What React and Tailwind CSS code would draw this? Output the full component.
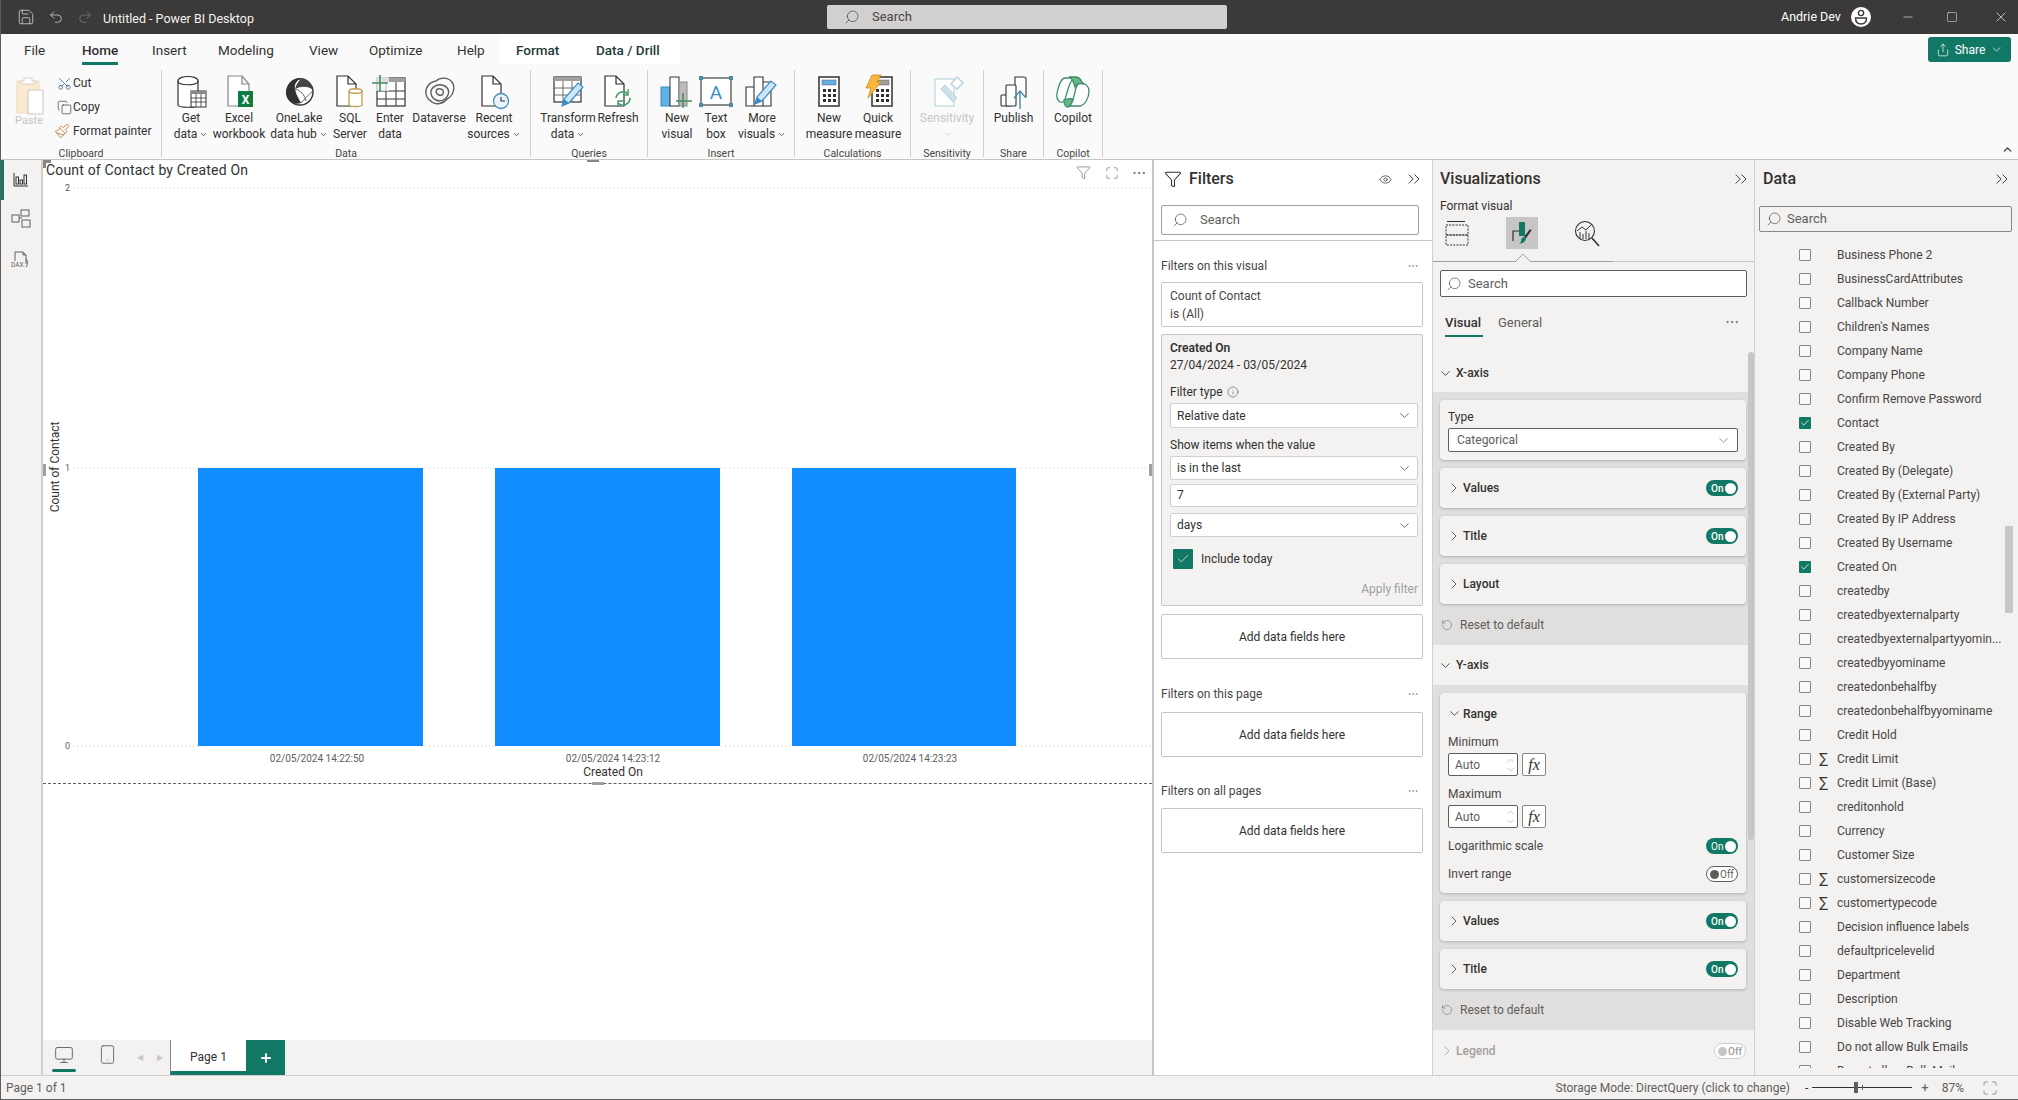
import React from "react";
import {
  ChevronDown,
  ChevronRight,
  ChevronsRight,
  ChevronUp,
  Eye,
  Filter,
  Search,
  Undo2,
  Redo2,
  Save,
  Minus,
  Square,
  X,
  RotateCcw,
  Info,
  Check,
  Share,
  Monitor,
  Smartphone,
  Plus,
  MoreHorizontal,
  Maximize,
  Scissors,
  Copy,
  Paintbrush,
} from "lucide-react";

const Doc = ({ x = 8, y = 2, w = 19, h = 30 }) => (
  <path
    d={`M${x} ${y}h${w - 8}l8 8v${h - 8}h-${w}zM${x + w - 8} ${y}v8h8`}
    fill="#fff"
    stroke="#323130"
    strokeWidth="1.2"
  />
);

const GetDataIcon = () => (
  <svg width="36" height="36" viewBox="0 0 36 36" fill="none">
    <path d="M5 7c0-6 20-6 20 0v24c0 3-20 3-20 0z" fill="#fff" stroke="#323130" strokeWidth="1.2" />
    <path d="M5 7c0 5 20 5 20 0" stroke="#323130" strokeWidth="1.2" />
    <rect x="18" y="17" width="15" height="16" fill="#fff" stroke="#323130" />
    <rect x="18" y="17" width="15" height="3" fill="#8a8886" />
    <path d="M18 24h15M18 28h15M23 20v13M28 20v13" stroke="#323130" strokeWidth=".8" />
  </svg>
);

const ExcelIcon = () => (
  <svg width="36" height="36" viewBox="0 0 36 36" fill="none">
    <path d="M7 2h14l7 8v22H7zM21 2v8h7" fill="#fff" stroke="#8a8886" strokeWidth="1.2" />
    <rect x="17" y="17" width="15" height="16" fill="#107c41" />
    <text x="24.5" y="30" textAnchor="middle" fontSize="12" fontWeight="700" fill="#fff">X</text>
  </svg>
);

const OneLakeIcon = () => (
  <svg width="36" height="36" viewBox="0 0 36 36" fill="none">
    <circle cx="19" cy="18" r="13" fill="#fff" stroke="#323130" strokeWidth="1.4" />
    <path d="M5 19C5 11 11 3 21 4c-5 2-8 6-7 11 1 6 4 10 6 14-8 3-15-3-15-10z" fill="#323130" />
    <path d="M21 4c6 1 10 6 11 12-5-4-11-4-18-1 1-4 3-8 7-11z" fill="#484644" />
    <path d="M14 15c5 1 10 6 11 12M20 29c3-3 7-8 12-12" stroke="#605e5c" strokeWidth="1" />
  </svg>
);

const SqlIcon = () => (
  <svg width="36" height="36" viewBox="0 0 36 36" fill="none">
    <Doc x={5} />
    <path d="M17 17c0-3 13-3 13 0v14c0 2-13 2-13 0z" fill="#fff" stroke="#c19c50" strokeWidth="1.3" />
    <path d="M17 17c0 3 13 3 13 0" stroke="#c19c50" strokeWidth="1.3" />
  </svg>
);

const EnterDataIcon = () => (
  <svg width="36" height="36" viewBox="0 0 36 36" fill="none">
    <rect x="5" y="4" width="28" height="28" fill="#fff" stroke="#323130" strokeWidth="1.2" />
    <rect x="5" y="4" width="28" height="4" fill="#a19f9d" />
    <path d="M5 17h28M5 25h28M14 8v24M24 8v24" stroke="#323130" strokeWidth="1" />
    <rect x="0" y="2" width="17" height="15" fill="#fafafa" fillOpacity=".7" />
    <path d="M8 1v17M0 9h16" stroke="#3f8f5f" strokeWidth="1.6" />
  </svg>
);

const DataverseIcon = () => (
  <svg width="36" height="36" viewBox="0 0 36 36" fill="none" stroke="#605e5c" strokeWidth="1.4">
    <path d="M6 23C2 14 9 8 15 7c4-4 12-4 16 1 4 6 1 14-5 17-4 5-11 6-15 3-2-1-4-3-5-5z" />
    <path d="M10 20c-1-6 5-10 11-9 5 1 8 5 6 10-2 5-8 7-12 5-3-1-4-3-5-6z" />
    <path d="M15 18c0-3 3-4 5-3 3 1 3 4 1 6-2 1-5 0-6-3z" />
  </svg>
);

const RecentIcon = () => (
  <svg width="36" height="36" viewBox="0 0 36 36" fill="none">
    <Doc x={6} />
    <circle cx="25" cy="27" r="7.5" fill="#eaf4fb" stroke="#4b8fb5" strokeWidth="1.3" />
    <path d="M25 23v4h4" stroke="#323130" strokeWidth="1.1" />
  </svg>
);

const PencilBlue = ({ x = 0, y = 0 }) => (
  <g transform={`translate(${x} ${y})`}>
    <path d="M3 28l2-7L19 5l5 4L10 25z" fill="#cde6f5" stroke="#3a8ec4" strokeWidth="1.2" />
    <path d="M3 28l2-7 5 4z" fill="#3a8ec4" />
  </g>
);

const TransformIcon = () => (
  <svg width="36" height="36" viewBox="0 0 36 36" fill="none">
    <rect x="4" y="3" width="27" height="25" fill="#fff" stroke="#323130" strokeWidth="1.2" />
    <rect x="4" y="3" width="27" height="4" fill="#a19f9d" />
    <path d="M4 14h27M4 21h27M13 7v21M22 7v21" stroke="#605e5c" strokeWidth=".9" />
    <PencilBlue x={9} y={4} />
  </svg>
);

const RefreshIcon = () => (
  <svg width="36" height="36" viewBox="0 0 36 36" fill="none">
    <Doc x={5} />
    <path d="M16 24a7 7 0 0 1 12-4M30 24a7 7 0 0 1-12 5" stroke="#3f9a64" strokeWidth="1.6" />
    <path d="M28 15v6h-5M18 33v-6h5" stroke="#3f9a64" strokeWidth="1.4" />
  </svg>
);

const NewVisualIcon = () => (
  <svg width="36" height="36" viewBox="0 0 36 36" fill="none">
    <rect x="2" y="13" width="9" height="19" fill="#62aee6" stroke="#3a8ec4" />
    <rect x="11" y="3" width="9" height="29" fill="#fff" stroke="#323130" />
    <rect x="20" y="8" width="8" height="24" fill="#bdbbb9" stroke="#8a8886" />
    <path d="M24 19v15M17 27h16" stroke="#3f8f5f" strokeWidth="1.5" />
  </svg>
);

const TextBoxIcon = () => (
  <svg width="36" height="36" viewBox="0 0 36 36" fill="none">
    <rect x="3" y="4" width="30" height="27" fill="#fff" stroke="#323130" strokeWidth="1.1" />
    {[[3, 4], [33, 4], [3, 31], [33, 31]].map(([cx, cy]) => (
      <rect key={`${cx}-${cy}`} x={cx - 2} y={cy - 2} width="4" height="4" fill="#4b8aa6" />
    ))}
    <text x="18" y="25" textAnchor="middle" fontSize="19" fill="#3a8ec4">A</text>
  </svg>
);

const MoreVisualsIcon = () => (
  <svg width="36" height="36" viewBox="0 0 36 36" fill="none">
    <path d="M2 13h8v19H2zM10 3h9v29h-9zM19 8h8v24h-8z" fill="#fff" stroke="#323130" strokeWidth="1.1" />
    <PencilBlue x={8} y={2} />
  </svg>
);

const Calc = ({ x, top }) => (
  <g>
    <rect x={x} y="3" width="20" height="29" fill="#fff" stroke="#323130" strokeWidth="1.5" />
    <rect x={x + 3} y="6" width="14" height="5" fill={top} stroke="#605e5c" strokeWidth=".5" />
    {[15, 20, 25].map((cy) =>
      [4, 9, 14].map((dx) => <rect key={`${cy}-${dx}`} x={x + dx} y={cy} width="3" height="3" fill="#323130" />)
    )}
  </g>
);

const NewMeasureIcon = () => (
  <svg width="36" height="36" viewBox="0 0 36 36" fill="none">
    <Calc x={8} top="#62aee6" />
  </svg>
);

const QuickMeasureIcon = () => (
  <svg width="36" height="36" viewBox="0 0 36 36" fill="none">
    <Calc x={12} top="#a19f9d" />
    <path d="M12 1h9l-4 7h4L8 24l3-10H6z" fill="#f6b73c" stroke="#d18b1c" strokeWidth=".8" />
  </svg>
);

const SensitivityIcon = () => (
  <svg width="36" height="36" viewBox="0 0 36 36" fill="none">
    <rect x="6" y="5" width="19" height="27" fill="#fff" stroke="#b6d2de" strokeWidth="1.1" />
    <path d="M12 15l12 13 4-4-12-13z" fill="#cfe0e6" stroke="#b6d2de" />
    <path d="M22 10l6-7 6 6-6 6z" fill="#fff" stroke="#b6d2de" strokeWidth="1.5" />
  </svg>
);

const PublishIcon = () => (
  <svg width="36" height="36" viewBox="0 0 36 36" fill="none">
    <path d="M15 20v-8h4V3h9c1 0 2 1 2 2v18" fill="#fff" stroke="#323130" strokeWidth="1.1" />
    <rect x="5" y="21" width="10" height="11" rx="1" fill="#fff" stroke="#323130" strokeWidth="1.1" />
    <rect x="10" y="11" width="10" height="21" rx="1" fill="#fff" stroke="#323130" strokeWidth="1.1" />
    <path d="M24 35V17M18 24l6-7 6 7" stroke="#4b8aa6" strokeWidth="1.4" fill="none" />
  </svg>
);

const CopilotIcon = () => (
  <svg width="36" height="36" viewBox="0 0 36 36" fill="none" strokeWidth="1.3" stroke="#3f8f6a">
    <path d="M10 4h11c-3 1-6 4-7 8l-4 13c-1 3-3 4-5 3-3-2-4-7-2-13 1-5 4-11 7-11z" fill="#fff" />
    <path d="M25 9c5 0 9 3 9 8 0 7-4 14-9 15H13c3-1 4-3 5-6l3-12c1-3 2-5 4-5z" fill="#fff" />
    <path d="M15 3h6c3 0 5 2 7 7-3-1-6-1-8 3-1-4-2-7-5-10z" fill="#67b688" />
    <path d="M9 26c3-1 6-2 9-1l-2 5c-1 2-2 3-4 3-2-1-3-3-3-7z" fill="#67b688" />
  </svg>
);

const ribbonGroups = [
  {
    name: "Data",
    width: "w-[369px]",
    buttons: [
      { icon: <GetDataIcon />, lines: ["Get", "data"], caret: true, w: "w-[50px]" },
      { icon: <ExcelIcon />, lines: ["Excel", "workbook"], w: "w-[46px]" },
      { icon: <OneLakeIcon />, lines: ["OneLake", "data hub"], caret: true, w: "w-[74px]" },
      { icon: <SqlIcon />, lines: ["SQL", "Server"], w: "w-[28px]" },
      { icon: <EnterDataIcon />, lines: ["Enter", "data"], w: "w-[52px]" },
      { icon: <DataverseIcon />, lines: ["Dataverse"], w: "w-[46px]" },
      { icon: <RecentIcon />, lines: ["Recent", "sources"], caret: true, w: "w-[64px]" },
    ],
  },
  {
    name: "Queries",
    width: "w-[117px]",
    buttons: [
      { icon: <TransformIcon />, lines: ["Transform", "data"], caret: true, w: "w-[66px]" },
      { icon: <RefreshIcon />, lines: ["Refresh"], w: "w-[34px]" },
    ],
  },
  {
    name: "Insert",
    width: "w-[147px]",
    buttons: [
      { icon: <NewVisualIcon />, lines: ["New", "visual"], w: "w-[50px]" },
      { icon: <TextBoxIcon />, lines: ["Text", "box"], w: "w-[28px]" },
      { icon: <MoreVisualsIcon />, lines: ["More", "visuals"], caret: true, w: "w-[64px]" },
    ],
  },
  {
    name: "Calculations",
    width: "w-[116px]",
    buttons: [
      { icon: <NewMeasureIcon />, lines: ["New", "measure"], w: "w-[60px]" },
      { icon: <QuickMeasureIcon />, lines: ["Quick", "measure"], w: "w-[38px]" },
    ],
  },
  {
    name: "Sensitivity",
    width: "w-[73px]",
    pad: "pl-0",
    buttons: [{ icon: <SensitivityIcon />, lines: ["Sensitivity"], caretOnly: true, disabled: true, w: "w-[73px]" }],
  },
  {
    name: "Share",
    width: "w-[60px]",
    pad: "pl-0",
    buttons: [{ icon: <PublishIcon />, lines: ["Publish"], w: "w-[60px]" }],
  },
  {
    name: "Copilot",
    width: "w-[59px]",
    pad: "pl-0",
    buttons: [{ icon: <CopilotIcon />, lines: ["Copilot"], w: "w-[59px]" }],
  },
];

const RibbonButton = ({ icon, lines, caret, caretOnly, disabled, w }) => (
  <div className={`${w} flex flex-col items-center whitespace-nowrap text-[12px] leading-[16px] ${disabled ? "text-[#c8c6c4]" : "text-[#323130]"}`}>
    <div className="h-[36px] w-[36px] mt-[4px] shrink-0">{icon}</div>
    {lines.map((line, i) => (
      <div key={line} className="flex items-center">
        {line}
        {caret && i === lines.length - 1 && <ChevronDown size={9} strokeWidth={2} className="ml-[2px]" />}
      </div>
    ))}
    {caretOnly && <ChevronDown size={9} strokeWidth={2} className="mt-[4px]" />}
  </div>
);

const RibbonGroup = ({ name, width, pad = "pl-[4px]", buttons }) => (
  <div className={`${width} h-[87px] shrink-0 flex flex-col border-r border-[#d2d0ce]`}>
    <div className={`flex h-[76px] shrink-0 ${pad}`}>
      {buttons.map((b) => (
        <RibbonButton key={b.lines[0] + b.lines.length} {...b} />
      ))}
    </div>
    <div className="h-[16px] shrink-0 text-center text-[10.5px] leading-[16px] text-[#484644]">{name}</div>
  </div>
);

const TitleBar = () => (
  <div className="h-[34px] shrink-0 flex items-center bg-[#3b3a39] text-white relative">
    <Save size={18} strokeWidth={1.1} className="ml-[16px] text-[#d2d0ce]" />
    <Undo2 size={16} strokeWidth={1.2} className="ml-[13px] text-[#d2d0ce]" />
    <Redo2 size={16} strokeWidth={1.2} className="ml-[13px] text-[#797775]" />
    <span className="ml-[10px] mt-[5px] w-[724px] text-[12.5px] text-[#f3f2f1]">Untitled - Power BI Desktop</span>
    <div className="w-[400px] h-[24px] flex items-center bg-[#d2d0ce] rounded-[2px] text-[#484644]">
      <Search size={16} strokeWidth={1.1} className="ml-[17px] -scale-x-100" />
      <span className="ml-[12px] text-[13px]">Search</span>
    </div>
    <span className="ml-[554px] text-[12.5px]">Andrie Dev</span>
    <div className="ml-[10px] w-[20px] h-[20px] rounded-full bg-white flex items-center justify-center">
      <svg width="14" height="16" viewBox="0 0 14 16" fill="none" stroke="#3b3a39" strokeWidth="1.4">
        <circle cx="7" cy="4" r="2.6" />
        <path d="M1.5 9h11c0 4-2.5 6-5.5 6s-5.5-2-5.5-6z" />
      </svg>
    </div>
    <Minus size={14} strokeWidth={1} className="ml-[30px]" />
    <Square size={12} strokeWidth={1} className="ml-[31px]" />
    <X size={16} strokeWidth={1} className="ml-[35px]" />
  </div>
);

const MenuRow = () => (
  <div className="h-[36px] shrink-0 flex bg-[#fafafa] text-[13.5px] text-[#323130] pl-[23px]">
    <div className="w-[58px] pt-[6px]">File</div>
    <div className="w-[70px] pt-[6px]">
      <span className="inline-block h-[25px] font-medium border-b-[3px] border-[#117865]">Home</span>
    </div>
    <div className="w-[66px] pt-[6px]">Insert</div>
    <div className="w-[91px] pt-[6px]">Modeling</div>
    <div className="w-[60px] pt-[6px]">View</div>
    <div className="w-[88px] pt-[6px]">Optimize</div>
    <div className="w-[43px] pt-[6px]">Help</div>
    <div className="w-[76px] h-[30px] pt-[6px] pl-[16px] bg-white font-medium text-[#1f3b36]">Format</div>
    <div className="w-[104px] h-[30px] pt-[6px] pl-[20px] bg-white font-medium text-[#1f3b36]">Data / Drill</div>
  </div>
);

const Ribbon = () => (
  <div className="h-[89px] shrink-0 flex bg-[#fafafa] relative">
    <div className="w-[161px] h-[87px] shrink-0 flex flex-col border-r border-[#d2d0ce]">
      <div className="flex h-[76px] shrink-0">
        <div className="w-[56px] flex flex-col items-center text-[11px] text-[#c8c6c4]">
          <svg width="30" height="40" viewBox="0 0 30 40" fill="none" className="mt-[6px] ml-[1px]">
            <path d="M2 5h22v32H2z" fill="#fbe9d0" stroke="#ecd9be" />
            <path d="M9 5V2h8v3h3v3H6V5z" fill="#fff" stroke="#d2d0ce" />
            <path d="M13 14h15v24H13z" fill="#fff" stroke="#c8c6c4" />
          </svg>
          <span className="-mt-[3px]">Paste</span>
        </div>
        <div className="flex flex-col pt-[3px] text-[12px] text-[#323130]">
          <div className="flex items-center h-[20px] mb-[4px]">
            <Scissors size={15} strokeWidth={1.2} className="text-[#2f5f91] -rotate-90" />
            <span className="ml-[1px]">Cut</span>
          </div>
          <div className="flex items-center h-[20px] mb-[4px]">
            <Copy size={15} strokeWidth={1.1} />
            <span className="ml-[1px]">Copy</span>
          </div>
          <div className="flex items-center h-[20px] -ml-[3px]">
            <Paintbrush size={16} strokeWidth={1.3} className="text-[#c8803b]" />
            <span className="ml-[3px]">Format painter</span>
          </div>
        </div>
      </div>
      <div className="h-[16px] shrink-0 text-center text-[10.5px] leading-[16px] text-[#484644]">Clipboard</div>
    </div>
    {ribbonGroups.map((g) => (
      <RibbonGroup key={g.name} {...g} />
    ))}
    <div className="absolute left-[1927px] -top-[33px] w-[83px] h-[25px] bg-[#117865] rounded-[3px] flex items-center justify-center text-white text-[12px]">
      <Share size={14} strokeWidth={1.2} />
      <span className="mx-[5px]">Share</span>
      <ChevronDown size={13} strokeWidth={1.3} />
    </div>
    <ChevronUp size={13} strokeWidth={2.2} className="absolute left-[2000px] top-[73px] text-[#323130]" />
  </div>
);

const LeftNav = () => (
  <div className="w-[42px] shrink-0 bg-[#f3f2f1] border-r-[2px] border-[#d2d0ce] flex flex-col items-center relative">
    <div className="absolute left-0 top-0 w-[3px] h-[40px] bg-[#117865]" />
    <svg width="16" height="16" viewBox="0 0 16 16" fill="none" stroke="#323130" className="mt-[12px]">
      <path d="M1 1v13h14" strokeWidth="1" />
      <rect x="3" y="5" width="2.5" height="7" />
      <rect x="7" y="8" width="2.5" height="4" />
      <rect x="11" y="3" width="2.5" height="9" />
    </svg>
    <svg width="20" height="20" viewBox="0 0 20 20" fill="none" stroke="#605e5c" className="mt-[21px]">
      <rect x="1" y="6" width="7" height="7" />
      <rect x="10" y="1" width="8" height="6" />
      <rect x="11" y="11" width="8" height="7" />
      <path d="M8 9h3" />
    </svg>
    <svg width="20" height="20" viewBox="0 0 20 20" fill="none" stroke="#605e5c" className="mt-[21px]">
      <path d="M4 11V2h8l3 3v9M12 2v3h3" />
      <text x="0" y="17" fontSize="6.5" fill="#605e5c" stroke="none">DAX</text>
      <path d="M15 9c2 2 2 5 0 8" />
    </svg>
  </div>
);

const BarChart = () => (
  <svg width="1108" height="603" viewBox="1 20 1108 603" className="block">
    {[28, 308, 586].map((y) => (
      <line key={y} x1="31" x2="1109" y1={y} y2={y} stroke="#c8c6c4" strokeDasharray="1 3" />
    ))}
    {[[2, 28], [1, 308], [0, 586]].map(([n, y]) => (
      <text key={n} x="28" y={y + 3} fontSize="9" textAnchor="end" fill="#605e5c">{n}</text>
    ))}
    {[[156, 225], [453, 225], [750, 224]].map(([x, w]) => (
      <rect key={x} x={x} y="308" width={w} height="278" fill="#118dff" />
    ))}
    <text x="13" y="307" fontSize="12" textAnchor="middle" fill="#323130" transform="rotate(-90 13 307)" dominantBaseline="central">Count of Contact</text>
    {[[275, "02/05/2024 14:22:50"], [571, "02/05/2024 14:23:12"], [868, "02/05/2024 14:23:23"]].map(([x, t]) => (
      <text key={x} x={x} y="602" fontSize="10" textAnchor="middle" fill="#605e5c">{t}</text>
    ))}
    <text x="571" y="616" fontSize="12" textAnchor="middle" fill="#323130">Created On</text>
  </svg>
);

const Canvas = () => (
  <div className="flex-1 bg-white">
    <div className="h-[624px] relative border-b border-dashed border-[#605e5c]">
      <div className="h-[20px] flex items-center pl-[3px] pr-[5px]">
        <span className="text-[14px] tracking-[0.18px] text-[#323130]">Count of Contact by Created On</span>
        <Filter size={15} strokeWidth={1} className="ml-auto mt-[5px] text-[#605e5c]" />
        <Maximize size={14} strokeWidth={1} className="ml-[14px] mt-[5px] text-[#605e5c]" />
        <MoreHorizontal size={16} strokeWidth={1.3} className="ml-[12px] mt-[5px] text-[#605e5c]" />
      </div>
      <BarChart />
      <div className="absolute left-0 top-0 w-[8px] h-[3px] bg-[#8a8886]" />
      <div className="absolute left-0 top-0 w-[3px] h-[8px] bg-[#8a8886]" />
      <div className="absolute left-[544px] top-0 w-[12px] h-[2px] bg-[#8a8886]" />
      <div className="absolute left-0 top-[304px] w-[3px] h-[12px] bg-[#a19f9d]" />
      <div className="absolute right-0 top-[304px] w-[3px] h-[12px] bg-[#a19f9d]" />
      <div className="absolute left-[549px] bottom-[-2px] w-[12px] h-[3px] bg-[#a19f9d]" />
    </div>
  </div>
);

const PageTabs = () => (
  <div className="h-[35px] shrink-0 bg-[#f3f2f1] flex items-stretch">
    <div className="w-[32px] ml-[5px] flex flex-col items-center">
      <Monitor size={20} strokeWidth={1.1} className="mt-[5px] text-[#605e5c]" />
      <div className="w-[24px] h-[3px] rounded-[2px] bg-[#117865] mt-[4px]" />
    </div>
    <div className="w-[54px] flex justify-center pt-[4px]">
      <Smartphone size={21} strokeWidth={1} className="text-[#605e5c]" />
    </div>
    <div className="w-[40px] flex items-center justify-center gap-[14px] text-[#c8c6c4] text-[8px] -ml-[4px]">
      <span>◀</span>
      <span>▶</span>
    </div>
    <div className="w-[76px] bg-white border-l border-[#8a8886] border-b-[4px] border-b-[#117865] pt-[3px] flex items-center justify-center text-[12px] text-[#323130]">
      Page 1
    </div>
    <div className="w-[39px] bg-[#117865] flex items-center justify-center">
      <Plus size={14} strokeWidth={3.2} className="text-white" />
    </div>
  </div>
);

const SearchBox = ({ border, className, textClass = "ml-[8px]", iconClass = "ml-[8px]" }) => (
  <div className={`flex items-center border ${border} rounded-[2px] ${className}`}>
    <Search size={16} strokeWidth={1} className={`${iconClass} text-[#484644] -scale-x-100`} />
    <span className={`${textClass} text-[13px] text-[#605e5c]`}>Search</span>
  </div>
);

const PanelTitle = ({ children, icon, extra }) => (
  <div className="h-[38px] flex items-center text-[16px] font-medium text-[#323130]">
    {icon}
    {children}
    {extra}
  </div>
);

const Select = ({ label, className }) => (
  <div className={`flex items-center justify-between bg-white border border-[#d2d0ce] rounded-[2px] pl-[6px] pr-[5px] text-[12px] text-[#323130] ${className}`}>
    {label}
    <ChevronDown size={15} strokeWidth={1.1} />
  </div>
);

const EmptyWell = ({ className = "" }) => (
  <div className={`h-[45px] flex items-center justify-center bg-white border border-[#c8c6c4] rounded-[2px] text-[12px] text-[#323130] ${className}`}>
    Add data fields here
  </div>
);

const FilterHeading = ({ children, className = "" }) => (
  <div className={`h-[16px] flex items-center justify-between pr-[4px] text-[12px] leading-[16px] text-[#484644] ${className}`}>
    {children}
    <MoreHorizontal size={12} strokeWidth={1} className="text-[#605e5c]" />
  </div>
);

const FiltersPanel = () => (
  <div className="w-[280px] shrink-0 bg-white border-l-[2px] border-[#c8c6c4] flex flex-col">
    <div className="pl-[7px] pr-[8px]">
      <PanelTitle
        icon={<Filter size={18} strokeWidth={1.4} className="ml-[3px] mr-[7px] text-[#323130]" />}
        extra={
          <span className="ml-auto flex items-center">
            <Eye size={13} strokeWidth={1.3} />
            <ChevronsRight size={20} strokeWidth={1.1} className="ml-[12px]" />
          </span>
        }
      >
        Filters
      </PanelTitle>
      <SearchBox border="border-[#a19f9d]" className="mt-[7px] h-[30px] w-[258px] bg-white" iconClass="ml-[10px]" textClass="ml-[12px]" />
    </div>
    <div className="border-b border-[#c8c6c4] mt-[5px]" />
    <div className="pl-[7px] pr-[9px]">
      <FilterHeading className="mt-[17px]">Filters on this visual</FilterHeading>
      <div className="mt-[8px] h-[45px] bg-white border border-[#c8c6c4] rounded-[2px] pl-[8px] pt-[4px] text-[12px] leading-[18px] text-[#484644]">
        <div>Count of Contact</div>
        <div>is (All)</div>
      </div>
      <div className="mt-[7px] h-[272px] bg-[#f3f2f1] border border-[#c8c6c4] rounded-[2px] pl-[8px] pr-[4px] pt-[5px] text-[12px] text-[#323130]">
        <div className="h-[17px] leading-[17px] font-semibold">Created On</div>
        <div className="h-[17px] leading-[17px]">27/04/2024 - 03/05/2024</div>
        <div className="mt-[10px] h-[16px] leading-[16px] flex items-center">
          Filter type
          <Info size={12} strokeWidth={1} className="ml-[4px]" />
        </div>
        <Select label="Relative date" className="mt-[3px] h-[25px]" />
        <div className="mt-[9px] h-[16px] leading-[16px]">Show items when the value</div>
        <Select label="is in the last" className="mt-[3px] h-[24px]" />
        <div className="mt-[4px] h-[23px] leading-[21px] bg-white border border-[#d2d0ce] rounded-[2px] pl-[6px]">7</div>
        <Select label="days" className="mt-[6px] h-[24px]" />
        <div className="mt-[12px] h-[20px] flex items-center pl-[3px]">
          <div className="w-[20px] h-[20px] bg-[#117865] flex items-center justify-center rounded-[1px]">
            <Check size={14} strokeWidth={1.2} className="text-white" />
          </div>
          <span className="ml-[8px]">Include today</span>
        </div>
        <div className="mt-[12px] h-[16px] leading-[16px] text-right text-[#a19f9d]">Apply filter</div>
      </div>
      <EmptyWell className="mt-[8px]" />
      <FilterHeading className="mt-[27px]">Filters on this page</FilterHeading>
      <EmptyWell className="mt-[10px]" />
      <FilterHeading className="mt-[26px]">Filters on all pages</FilterHeading>
      <EmptyWell className="mt-[9px]" />
    </div>
  </div>
);

const Toggle = ({ on = true, faded }) =>
  on ? (
    <div className="w-[32px] h-[16px] rounded-full bg-[#117865] flex items-center justify-between pl-[5px] pr-[2px] text-[10px] text-white">
      On
      <span className="w-[11px] h-[11px] rounded-full bg-white" />
    </div>
  ) : (
    <div className={`w-[32px] h-[16px] rounded-full border flex items-center pl-[3px] text-[10px] bg-white ${faded ? "border-[#d2d0ce] text-[#a19f9d]" : "border-[#605e5c] text-[#605e5c]"}`}>
      <span className={`w-[9px] h-[9px] rounded-full mr-[1px] ${faded ? "bg-[#c8c6c4]" : "bg-[#605e5c]"}`} />
      Off
    </div>
  );

const cardClass = "bg-[#f3f2f1] rounded-[4px] shadow-[0_1px_3px_rgba(0,0,0,0.22)]";

const CollapsedCard = ({ title, on }) => (
  <div className={`h-[40px] flex items-center px-[8px] text-[12px] font-medium text-[#323130] ${cardClass}`}>
    <ChevronRight size={16} strokeWidth={1.1} className="mr-[1px] -ml-[2px]" />
    {title}
    {on && (
      <span className="ml-auto">
        <Toggle />
      </span>
    )}
  </div>
);

const ResetRow = () => (
  <div className="h-[41px] -mt-[8px] flex items-center -ml-[8px] pl-[9px] text-[12px] text-[#605e5c]">
    <RotateCcw size={12} strokeWidth={1} className="mr-[7px]" />
    Reset to default
  </div>
);

const SectionHeader = ({ title, className }) => (
  <div className={`flex items-center pl-[5px] text-[12px] font-medium text-[#323130] ${className}`}>
    <ChevronDown size={15} strokeWidth={1.3} className="mr-[3px]" />
    {title}
  </div>
);

const AutoField = () => (
  <div className="flex gap-[4px] mt-[3px] h-[23px]">
    <div className="w-[70px] bg-white border border-[#605e5c] rounded-[2px] flex items-center justify-between pl-[6px] pr-[1px] text-[12px] text-[#605e5c]">
      Auto
      <span className="flex flex-col">
        <ChevronUp size={11} strokeWidth={1} className="-mb-[2px] text-[#8a8886]" />
        <ChevronDown size={11} strokeWidth={1} className="text-[#8a8886]" />
      </span>
    </div>
    <div className="w-[24px] bg-white border border-[#8a8886] rounded-[2px] flex items-center justify-center text-[16px] italic font-['Liberation_Serif',serif] text-[#323130]">
      fx
    </div>
  </div>
);

const VizPanel = () => (
  <div className="w-[322px] shrink-0 bg-[#f3f2f1] border-l border-[#d2d0ce] flex flex-col relative">
    <div className="pl-[7px] pr-[3px]">
      <PanelTitle extra={<ChevronsRight size={20} strokeWidth={1.1} className="ml-auto" />}>Visualizations</PanelTitle>
      <div className="h-[16px] leading-[16px] text-[12px] text-[#323130]">Format visual</div>
    </div>
    <div className="flex mt-[3px] h-[32px] items-center">
      <svg width="24" height="26" viewBox="0 0 24 26" fill="none" stroke="#323130" className="ml-[12px]">
        <path d="M2 1.5h18" />
        <path d="M1 5h22v10H1zM1 15h22v10H1z" strokeDasharray="2 1.2" />
      </svg>
      <div className="ml-[37px] w-[32px] h-[32px] bg-[#c8c6c4] flex items-center justify-center">
        <svg width="26" height="26" viewBox="0 0 26 26" fill="none">
          <rect x="10" y="2" width="6" height="14" fill="#117865" />
          <path d="M4 21v-10h6" stroke="#323130" strokeWidth="1.2" />
          <path d="M15 17l6-8 1.6 1.3-5.6 8z" fill="#323130" />
          <path d="M15 17l2 1.6c-.5 3-3 5-7 5 2-1 2-2 2.2-3.6.2-1.6 1.4-3 2.8-3z" fill="#117865" />
        </svg>
      </div>
      <svg width="26" height="28" viewBox="0 0 26 28" fill="none" stroke="#323130" className="ml-[36px]">
        <circle cx="11" cy="12" r="9.5" strokeWidth="1.1" />
        <path d="M18 19l7 8" strokeWidth="1.6" />
        <path d="M6 20v-7M9 20v-5M12 20v-8M15 20v-6" strokeWidth="1" />
        <path d="M3 12l5-4 4 3 6-6" strokeWidth="1" />
      </svg>
    </div>
    <div className="mt-[12px] border-b border-[#c8c6c4] relative">
      <div className="absolute left-0 bottom-[-1px] w-[180px] border-b border-[#a19f9d]" />
      <svg width="16" height="8" viewBox="0 0 16 8" className="absolute left-[82px] bottom-[-1px]">
        <path d="M0 8L8 0l8 8" fill="#f3f2f1" stroke="#a19f9d" />
      </svg>
    </div>
    <SearchBox border="border-[#605e5c]" className="mt-[8px] ml-[7px] w-[307px] h-[27px] bg-white" iconClass="ml-[5px]" textClass="ml-[6px]" />
    <div className="mt-[17px] h-[23px] flex pl-[12px] pr-[14px] text-[13px] leading-[18px] text-[#323130]">
      <div className="w-[38px] h-[23px] border-b-[2px] border-[#117865] font-medium">Visual</div>
      <div className="ml-[15px] text-[#605e5c]">General</div>
      <MoreHorizontal size={16} strokeWidth={1.2} className="ml-auto text-[#605e5c]" />
    </div>
    <SectionHeader title="X-axis" className="mt-[17px] h-[38px]" />
    <div className="bg-[#e1dfdd] pt-[8px] pl-[7px] pr-[8px] flex flex-col gap-[8px]">
      <div className={`h-[60px] px-[8px] pt-[9px] text-[12px] text-[#323130] ${cardClass}`}>
        <div className="h-[16px] leading-[16px]">Type</div>
        <div className="mt-[3px] h-[24px] bg-white border border-[#605e5c] rounded-[2px] flex items-center justify-between pl-[8px] pr-[6px] text-[#605e5c]">
          Categorical
          <ChevronDown size={15} strokeWidth={1} />
        </div>
      </div>
      <CollapsedCard title="Values" on />
      <CollapsedCard title="Title" on />
      <CollapsedCard title="Layout" />
      <ResetRow />
    </div>
    <SectionHeader title="Y-axis" className="h-[40px]" />
    <div className="bg-[#e1dfdd] pt-[8px] pl-[7px] pr-[8px] flex flex-col gap-[8px]">
      <div className={`h-[200px] px-[8px] text-[12px] text-[#484644] ${cardClass}`}>
        <div className="h-[41px] flex items-center font-medium text-[#323130]">
          <ChevronDown size={15} strokeWidth={1.3} className="mr-[1px] -ml-[1px]" />
          Range
        </div>
        <div className="h-[16px] leading-[16px]">Minimum</div>
        <AutoField />
        <div className="mt-[10px] h-[16px] leading-[16px]">Maximum</div>
        <AutoField />
        <div className="mt-[8px] h-[20px] flex items-center justify-between">
          Logarithmic scale
          <Toggle />
        </div>
        <div className="mt-[8px] h-[20px] flex items-center justify-between">
          Invert range
          <Toggle on={false} />
        </div>
      </div>
      <CollapsedCard title="Values" on />
      <CollapsedCard title="Title" on />
      <ResetRow />
    </div>
    <div className="h-[42px] flex items-center pl-[6px] pr-[8px] text-[12px] text-[#a19f9d] font-medium">
      <ChevronRight size={16} strokeWidth={1.1} className="mr-[1px]" />
      Legend
      <span className="ml-auto">
        <Toggle on={false} faded />
      </span>
    </div>
    <div className="absolute right-0 top-[192px] w-[6px] h-[488px] bg-[#c8c6c4] rounded-full" />
  </div>
);

const fields = [
  ["Business Phone 2"],
  ["BusinessCardAttributes"],
  ["Callback Number"],
  ["Children's Names"],
  ["Company Name"],
  ["Company Phone"],
  ["Confirm Remove Password"],
  ["Contact", "checked"],
  ["Created By"],
  ["Created By (Delegate)"],
  ["Created By (External Party)"],
  ["Created By IP Address"],
  ["Created By Username"],
  ["Created On", "checked"],
  ["createdby"],
  ["createdbyexternalparty"],
  ["createdbyexternalpartyyomin..."],
  ["createdbyyominame"],
  ["createdonbehalfby"],
  ["createdonbehalfbyyominame"],
  ["Credit Hold"],
  ["Credit Limit", "sum"],
  ["Credit Limit (Base)", "sum"],
  ["creditonhold"],
  ["Currency"],
  ["Customer Size"],
  ["customersizecode", "sum"],
  ["customertypecode", "sum"],
  ["Decision influence labels"],
  ["defaultpricelevelid"],
  ["Department"],
  ["Description"],
  ["Disable Web Tracking"],
  ["Do not allow Bulk Emails"],
  ["Do not allow Bulk Mails"],
];

const FieldRow = ({ name, kind }) => (
  <div className="h-[24px] shrink-0 flex items-center pl-[44px] text-[12px] text-[#484644] whitespace-nowrap">
    {kind === "checked" ? (
      <div className="w-[12px] h-[12px] bg-[#117865] flex items-center justify-center rounded-[1px]">
        <Check size={10} strokeWidth={2} className="text-white" />
      </div>
    ) : (
      <div className="w-[12px] h-[12px] border border-[#8a8886] rounded-[1px] bg-[#f8f8f8]" />
    )}
    <div className="w-[26px] pl-[8px] text-[15px] leading-none text-[#323130]">{kind === "sum" ? "∑" : ""}</div>
    {name}
  </div>
);

const DataPanel = () => (
  <div className="flex-1 bg-[#f3f2f1] border-l border-[#d2d0ce] flex flex-col relative overflow-hidden">
    <div className="pl-[8px] pr-[6px]">
      <PanelTitle extra={<ChevronsRight size={20} strokeWidth={1.1} className="ml-auto" />}>Data</PanelTitle>
    </div>
    <SearchBox border="border-[#8a8886]" className="mt-[8px] ml-[4px] w-[253px] h-[26px] shrink-0" iconClass="ml-[6px]" textClass="ml-[5px]" />
    <div className="mt-[11px] h-[825px] overflow-hidden flex flex-col">
      {fields.map(([name, kind]) => (
        <FieldRow key={name} name={name} kind={kind} />
      ))}
    </div>
    <div className="absolute right-[5px] top-[366px] w-[8px] h-[87px] bg-[#c8c6c4]" />
  </div>
);

const StatusBar = () => (
  <div className="h-[25px] shrink-0 flex items-center bg-[#f3f2f1] border-t border-[#d2d0ce] border-b border-b-[#605e5c] text-[12px] text-[#605e5c]">
    <span className="ml-[5px]">Page 1 of 1</span>
    <span className="ml-auto">Storage Mode: DirectQuery (click to change)</span>
    <span className="ml-[15px] text-[#323130]">-</span>
    <div className="ml-[4px] w-[100px] h-[1px] bg-[#323130] relative">
      <div className="absolute left-[42px] -top-[5px] w-[4px] h-[11px] bg-[#605e5c]" />
      <div className="absolute left-[50px] -top-[2px] w-[1px] h-[5px] bg-[#605e5c]" />
    </div>
    <span className="ml-[9px] text-[13px]">+</span>
    <span className="ml-[13px]">87%</span>
    <Maximize size={16} strokeWidth={1} className="ml-[18px] mr-[20px]" />
  </div>
);

const App = () => {
  return (
    <div className="w-[2018px] h-[1100px] flex flex-col overflow-hidden bg-white border-l border-[#605e5c] font-['Roboto',sans-serif] text-[#323130]">
      <TitleBar />
      <MenuRow />
      <Ribbon />
      <div className="flex-1 flex min-h-0 border-t border-[#c8c6c4]">
        <LeftNav />
        <div className="w-[1109px] shrink-0 flex flex-col">
          <Canvas />
          <PageTabs />
        </div>
        <FiltersPanel />
        <VizPanel />
        <DataPanel />
      </div>
      <StatusBar />
    </div>
  );
};

export default App;
